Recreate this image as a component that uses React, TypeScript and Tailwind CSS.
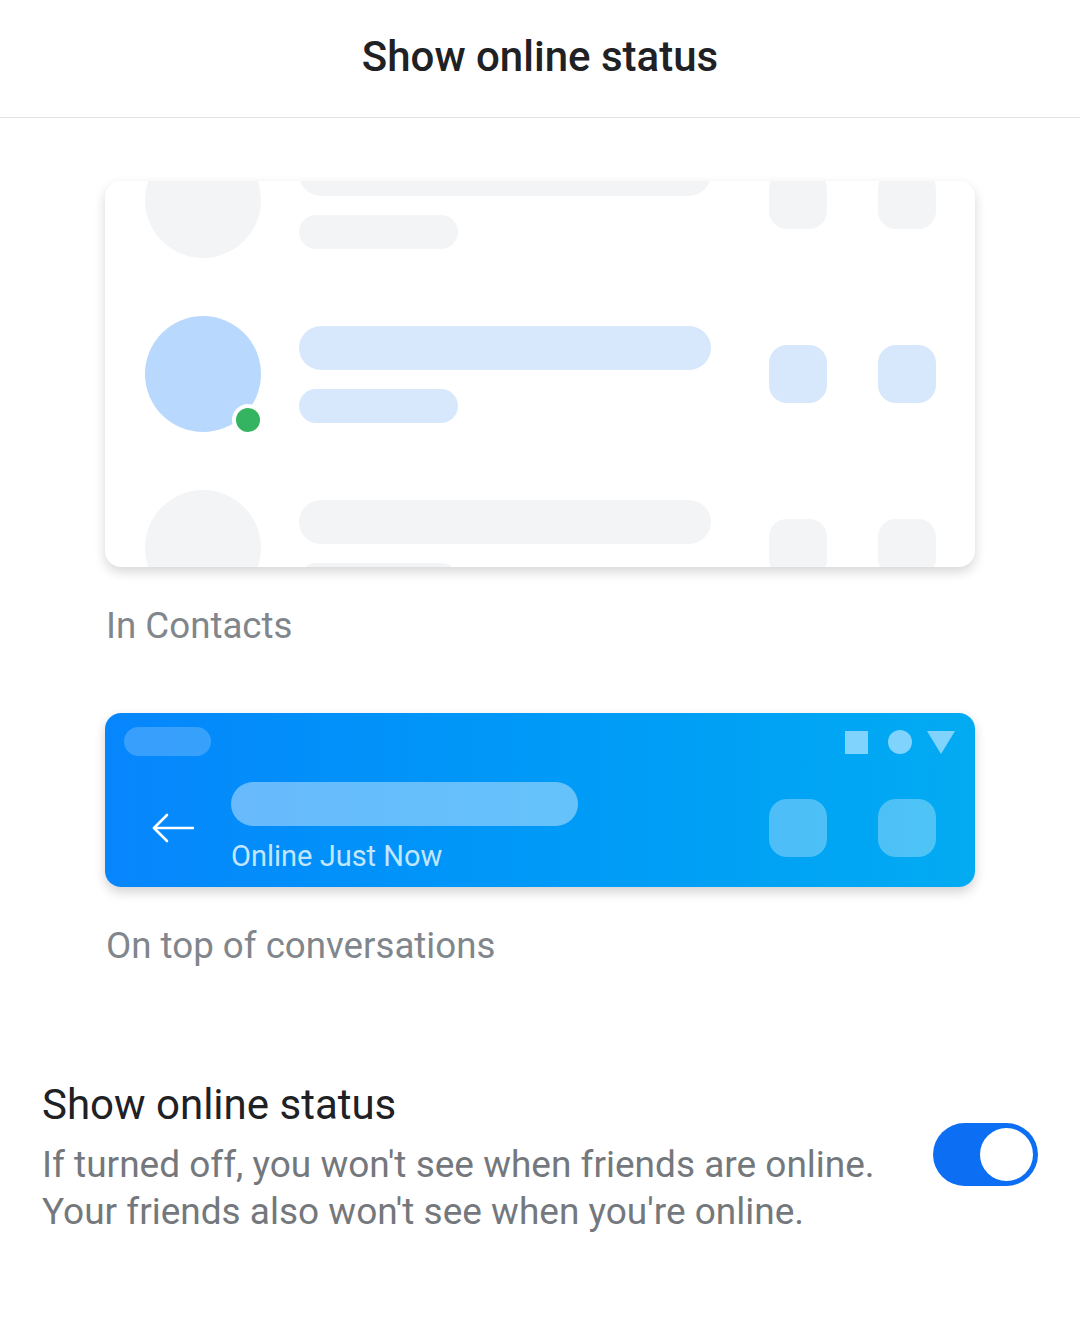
import React, { useState } from 'react';

type RowTone = 'gray' | 'blue';

function ContactRow({ tone, online }: { tone: RowTone; online?: boolean }) {
  const avatar = tone === 'blue' ? 'bg-[#b8d9fd]' : 'bg-[#f3f4f5]';
  const fill = tone === 'blue' ? 'bg-[#d7e8fd]' : 'bg-[#f3f4f5]';
  return (
    <div className="flex h-[174px] shrink-0 items-center pl-[40px] pr-[39px]">
      <div className={`relative h-[116px] w-[116px] shrink-0 rounded-full ${avatar}`}>
        {online && (
          <div className="absolute left-[87px] top-[88px] h-[32px] w-[32px] rounded-full border-[4px] border-white bg-[#34b360]" />
        )}
      </div>
      <div className="ml-[38px] flex flex-col gap-[19px]">
        <div className={`h-[44px] w-[412px] rounded-full ${fill}`} />
        <div className={`h-[34px] w-[159px] rounded-full ${fill}`} />
      </div>
      <div className="ml-auto flex gap-[51px]">
        <div className={`h-[58px] w-[58px] rounded-[18px] ${fill}`} />
        <div className={`h-[58px] w-[58px] rounded-[18px] ${fill}`} />
      </div>
    </div>
  );
}

function ContactsPreview() {
  return (
    <div className="mx-[105px] mt-[63px] h-[386px] overflow-hidden rounded-[16px] bg-white shadow-[0_5px_12px_rgba(0,0,0,0.16)]">
      <div className="-mt-[68px] flex flex-col">
        <ContactRow tone="gray" />
        <ContactRow tone="blue" online />
        <ContactRow tone="gray" />
      </div>
    </div>
  );
}

function ConversationPreview() {
  return (
    <div className="mx-[105px] mt-[65px] h-[174px] rounded-[16px] bg-gradient-to-r from-[#0786fc] to-[#03abf2] shadow-[0_5px_12px_rgba(0,0,0,0.18)]">
      <div className="flex items-start justify-between pl-[19px] pr-[20px] pt-[14px]">
        <div className="h-[29px] w-[87px] rounded-full bg-white/20" />
        <div className="mt-[3px] flex items-center gap-[20px]">
          <div className="h-[23px] w-[23px] bg-[#80d3fd]" />
          <div className="h-[24px] w-[24px] rounded-full bg-[#80d3fd]" />
          <svg width="28" height="23" viewBox="0 0 28 23" className="-ml-[5px]">
            <path d="M0 0 H28 L14 23 Z" fill="#80d3fd" />
          </svg>
        </div>
      </div>
      <div className="mt-[26px] flex items-start pl-[47px] pr-[39px]">
        <svg width="42" height="30" viewBox="0 0 42 30" className="mt-[31px]" fill="none" stroke="white" strokeWidth="2.6" strokeLinecap="round" strokeLinejoin="round">
          <path d="M41 15 H2" />
          <path d="M15 2 L2 15 L15 28" />
        </svg>
        <div className="ml-[37px] flex flex-col">
          <div className="h-[44px] w-[347px] rounded-full bg-white/40" />
          <div className="mt-[12px] font-['Roboto',sans-serif] text-[29px] leading-[36px] text-[#c3e6ff]">
            Online Just Now
          </div>
        </div>
        <div className="ml-auto mt-[17px] flex gap-[51px]">
          <div className="h-[58px] w-[58px] rounded-[18px] bg-white/30" />
          <div className="h-[58px] w-[58px] rounded-[18px] bg-white/30" />
        </div>
      </div>
    </div>
  );
}

function Toggle({ on, onChange }: { on: boolean; onChange: () => void }) {
  return (
    <button
      onClick={onChange}
      className={`flex h-[63px] w-[105px] shrink-0 items-center rounded-full p-[5px] ${
        on ? 'justify-end bg-[#0b6ef3]' : 'justify-start bg-[#bdc1c6]'
      }`}
    >
      <span className="h-[53px] w-[53px] rounded-full bg-white" />
    </button>
  );
}

export default function App() {
  const [showStatus, setShowStatus] = useState(true);

  return (
    <div className="min-h-[1319px] w-[1080px] bg-white font-['Roboto',sans-serif]">
      <div className="flex h-[118px] items-center justify-center border-b border-[#e3e3e3] pb-[4px]">
        <h1 className="text-[42px] font-medium leading-none text-[#202124]">Show online status</h1>
      </div>

      <ContactsPreview />
      <p className="mt-[37px] pl-[106px] text-[36.7px] leading-[44px] text-[#80868b]">In Contacts</p>

      <ConversationPreview />
      <p className="mt-[37px] pl-[106px] text-[36.7px] leading-[44px] text-[#80868b]">On top of conversations</p>

      <div className="mt-[113px] flex items-center justify-between pl-[42px] pr-[42px]">
        <div className="flex flex-col">
          <h2 className="text-[42px] leading-[48px] text-[#202124]">Show online status</h2>
          <p className="mt-[12px] text-[37px] leading-[47px] text-[#74787d]">
            If turned off, you won't see when friends are online.
            <br />
            Your friends also won't see when you're online.
          </p>
        </div>
        <div className="-mt-[8px]">
          <Toggle on={showStatus} onChange={() => setShowStatus((v) => !v)} />
        </div>
      </div>
    </div>
  );
}
